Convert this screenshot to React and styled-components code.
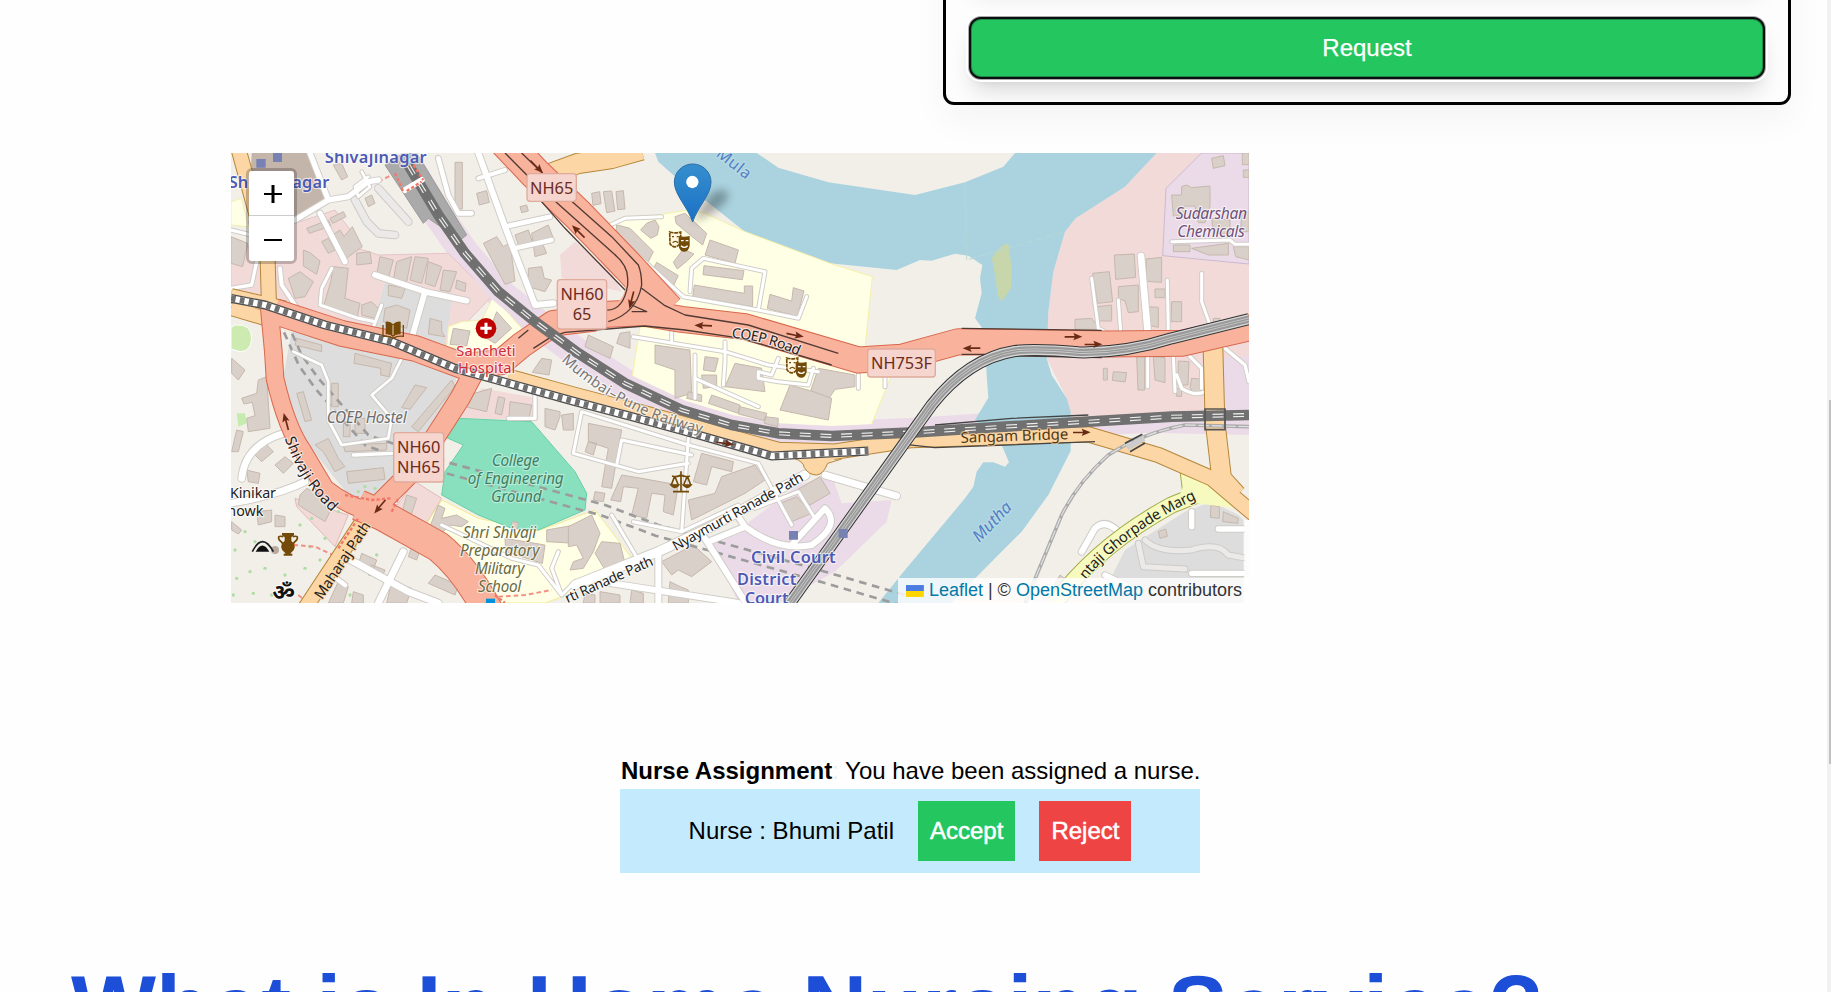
import React from 'react';
import styled, { createGlobalStyle, css } from 'styled-components';

const GlobalStyle = createGlobalStyle`
  * { box-sizing: border-box; }
  html, body { margin: 0; padding: 0; height: 992px; overflow: hidden; background: #fefefe; }
  body { font-family: "Liberation Sans", Arial, sans-serif; font-size: 24px; line-height: 36px; color: #000; }
`;

const Page = styled.div`
  display: flex;
  height: 992px;
  overflow: hidden;
`;
const Content = styled.main`
  flex: 1;
  display: flex;
  flex-direction: column;
  align-items: flex-start;
  min-width: 0;
  overflow: hidden;
`;
const ScrollTrack = styled.div`
  width: 4px;
  padding: 400px 0 0 2px;
  background: #f1f1f1;
`;
const ScrollThumb = styled.div`
  height: 364px;
  background: #c1c1c1;
`;

const RequestCard = styled.section`
  flex: none;
  display: flex;
  flex-direction: column;
  justify-content: flex-end;
  gap: 34px;
  width: 848px;
  height: 185px;
  margin: -80px 0 0 943px;
  padding: 0 23px 23px 23px;
  border: 3px solid #000;
  border-radius: 11px;
  background: #fdfdfd;
  box-shadow: 0 15px 36px rgba(0, 0, 0, 0.045);
`;
const InputField = styled.div`
  height: 40px;
  border-radius: 12px;
  background: #fff;
  box-shadow: 0 15px 22px -4px rgba(0, 0, 0, 0.12);
`;
const RequestButton = styled.button`
  height: 62px;
  border: 2px solid #0c0f10;
  border-radius: 12px;
  background: #24c65f;
  color: #fff;
  font: inherit;
  -webkit-text-stroke: 0.25px #fff;
  box-shadow: inset 0 0 0 1px rgba(20, 70, 40, 0.45), 0 0 0 1px #aaa, 0 0 0 3px #fff,
    0 15px 22px -4px rgba(0, 0, 0, 0.15), 0 6px 9px -4px rgba(0, 0, 0, 0.08);
`;

const MapFrame = styled.section`
  flex: none;
  position: relative;
  width: 1018px;
  height: 450px;
  margin: 48px 0 0 231px;
  overflow: hidden;
`;
const MapDrawing = styled.svg`
  display: block;
  width: 1018px;
  height: 450px;
`;
const ZoomControl = styled.div`
  position: absolute;
  top: 15px;
  left: 15px;
  display: flex;
  flex-direction: column;
  width: 51px;
  border: 3px solid rgba(0, 0, 0, 0.22);
  border-radius: 6px;
  background-clip: padding-box;
`;
const ZoomButton = styled.button`
  display: flex;
  align-items: center;
  justify-content: center;
  height: 45px;
  padding: 2px 0 0 2px;
  border: 0;
  background: #fff;
  border-radius: ${(p) => (p.$first ? '3px 3px 0 0' : '0 0 3px 3px')};
  ${(p) => p.$first && css`border-bottom: 1px solid #ccc;`}
`;
const Attribution = styled.div`
  position: absolute;
  right: 0;
  bottom: 0;
  display: flex;
  align-items: center;
  height: 25px;
  width: 351px;
  padding: 0 7px 0 8px;
  background: rgba(255, 255, 255, 0.8);
  color: #333;
  font-size: 18px;
  line-height: 25px;
  white-space: pre;
`;
const AttributionLink = styled.span`
  color: #0078a8;
`;
const Flag = styled.svg`
  width: 18px;
  height: 12px;
  margin-right: 5px;
`;

const Assignment = styled.section`
  flex: none;
  width: 580px;
  margin: 150px 0 0 620px;
  white-space: nowrap;
`;
const AssignmentText = styled.p`
  margin: 0;
  padding-left: 1px;
  line-height: 36px;
`;
const FaintColon = styled.span`
  color: #ededed;
`;
const NursePanel = styled.div`
  display: flex;
  align-items: center;
  justify-content: center;
  gap: 24px;
  height: 84px;
  background: #c4eafd;
`;
const ActionButton = styled.button`
  height: 60px;
  padding: 0 12px;
  border: 0;
  background: ${(p) => (p.$danger ? '#ef4444' : '#24c65f')};
  color: #fff;
  font: inherit;
  -webkit-text-stroke: 0.5px #fff;
`;
const Heading = styled.h1`
  flex: none;
  margin: 90px 0 0 71px;
  color: #1d4ed8;
  font-size: 90px;
  font-weight: 700;
  line-height: 90px;
  letter-spacing: 0.07px;
  white-space: nowrap;
`;

const Area = styled.path`
  fill: ${(p) => p.$fill};
  stroke: ${(p) => p.$edge || 'none'};
  stroke-width: 3;
`;
const Building = styled.path`
  fill: #d9d0c9;
  stroke: #c6b8ad;
  stroke-width: 3;
`;
const Line = styled.path`
  fill: none;
  stroke: ${(p) => p.$color};
  stroke-width: ${(p) => p.$w};
  stroke-linejoin: round;
  stroke-linecap: ${(p) => p.$cap || 'butt'};
  stroke-dasharray: ${(p) => p.$dash || 'none'};
`;
const Label = styled.text`
  font-family: "Noto Sans", "Open Sans", sans-serif;
  font-size: ${(p) => p.$size || 47}px;
  font-style: ${(p) => (p.$italic ? 'italic' : 'normal')};
  font-weight: ${(p) => p.$weight || 400};
  fill: ${(p) => p.$color || '#222'};
  stroke: ${(p) => p.$halo || 'rgba(255,255,255,.65)'};
  stroke-width: 7;
  stroke-linejoin: round;
  paint-order: stroke;
  text-anchor: middle;
`;
const ShieldBox = styled.rect`
  fill: #f5d5cd;
  stroke: #e0aa9c;
  stroke-width: 4;
`;

const ROAD_KINDS = {
  minor: ['#fff', '#d0cdc8'],
  service: ['#fff', '#cfcbc6'],
  faint: ['#eceae8', '#cdcbca'],
  orange: ['#fcd6a4', '#b58639'],
  trunk: ['#f9b29c', '#d8684e'],
  yellow: ['#f7fabf', '#a5ab46'],
};

function Roads({ kind, items, cap = 'round' }) {
  const [fill, casing] = ROAD_KINDS[kind];
  return (
    <g>
      {items.map(([d, w], i) => <Line key={'c' + i} d={d} $color={casing} $w={w + 6} $cap={cap} />)}
      {items.map(([d, w], i) => <Line key={'f' + i} d={d} $color={fill} $w={w} $cap={cap} />)}
    </g>
  );
}

const RIVER = 'M1290 24L1300 50L1345 90L1440 165L1560 260L1815 355L2015 375L2085 345L2120 347L2190 326L2230 332L2272 360L2265 400L2270 445L2250 520L2280 560L2285 690L2290 758L2250 825L2330 900L2352 952L2340 965L2305 952L2275 952L2255 980L2245 1025L2220 1060L2040 1275L1960 1374H2180L2240 1310L2390 1160L2470 1050L2537 918V800L2525 760L2480 690L2465 640L2470 500L2485 380L2520 260L2552 220L2700 125L2795 24H2370L2335 65L2220 112L2070 150L1810 112L1660 68L1595 24Z';

const AREAS = [
  ['M2795 24L2700 125L2552 220L2520 260L2485 380L2470 500L2465 640L2525 760L2537 830L3072 795V24Z', '#f2dad9'],
  ['M2930 24L2823 130L2813 332L3072 357V24Z', '#ebdbe8', '#cdb9d0'],
  ['M2990 635H3072V870L2640 860V840L2980 790Z', '#ebdbe8'],
  ['M18 330L210 235L330 195L380 260L400 310L460 330L670 325L800 455L660 600L18 450Z', '#f2dad9', '#e5c5c5'],
  ['M1050 290L1005 330L1010 400L1190 440L1160 380Z', '#f2dad9'],
  ['M80 24H245L310 175L210 220L70 240Z', '#c4b5ab'],
  ['M18 170L50 160L70 245L18 240Z', '#ffffe5', '#f3edb0'],
  ['M480 410L600 440L680 470L660 600L440 560Z', '#dddddd'],
  ['M200 560L360 580L700 690L640 840L500 1010L430 1070L370 1050L250 900L170 720Z', '#dddddd'],
  ['M770 730L940 760V825L700 820Z', '#f2dad9'],
  ['M570 1010L650 1060L590 1160L500 1100Z', '#f2dad9', '#e2baba'],
  ['M210 1060L370 1110L330 1205L215 1085Z', '#f2dad9', '#e2baba'],
  ['M805 455L895 555L800 620L665 605L670 545L710 530L770 525Z', '#ffffe5', '#f3edb0'],
  ['M1140 235L1390 195L1440 205L1560 260L1815 355L1942 395L1920 610L1995 700L1935 850L1560 845L1220 705L1245 545L1400 560L1320 450Z', '#ffffe5', '#f6f0a8'],
  ['M650 1065L760 1120L940 1157L1110 1095L1225 1245L1020 1352L960 1374H830L760 1300L590 1160Z', '#ffffe5', '#f3eb92'],
  ['M700 820L920 830L1050 980L1085 1045L1080 1095L940 1155L860 1150L760 1110L650 1050L660 980L715 900L658 875Z', '#88e0be', '#68cfa5'],
  ['M1820 990L1850 1075L2000 1065L1985 1130L1830 1280L1660 1374H1540L1450 1180L1560 1140L1720 1020Z', '#ebdbe8'],
  ['M2880 1100L2960 1070L3040 1110L3055 1125V1374H2620L2700 1215Z', '#dddddd'],
  ['M30 540Q80 535 80 580Q78 620 45 620L18 612V548Z', '#cdebb0', '#fff'],
  ['M35 805L60 805L65 835L40 845Z', '#c4ecae'],
  ['M2300 340Q2325 300 2350 295L2360 370L2358 430L2330 470L2318 450Q2310 380 2300 340Z', '#c8d7ab'],
];

const BUILDINGS = [
  // north west
  'M325 60L350 55L368 95L350 105Z M420 160l20-10 10 25-20 10Z M690 52h22v140h-22Z M755 145l30-8 8 35-30 8Z M885 185l20-5 5 18-20 5Z M920 265l50-25 15 40-35 10 15 35-35 10Z M870 270l40-15 12 35-40 15Z M775 295l40-20 20 30 20-12 15 115-30 10Z M910 370l40-5 8 35 22 5-20 35-50-15Z M950 640l30 5-8 45-50-8Z',
  'M245 250l65-25 8 18-65 22Z M315 220l40-20 8 15-40 20Z M315 275l30-20 12 20 25-30 30 60-55 40Z M290 290l20-10 20 35-20 10Z M395 325l40-5 5 35-45 5Z M235 315l20 8 30 25-10 40-40-25Z M190 400l35-20 40 30-25 45-30 5Z M325 365l45 5-10 90 45 15-8 40-100-35 20-70Z M465 335l40 10-15 55-35-10Z M515 350l45-15-15 75-40-5Z M570 335l40 5-20 75-35-10Z M610 350l40 15-20 60-30-10Z M655 375l40 5-20 60-30-5Z M695 405l28 10-3 25-28-10Z M490 420l50 10-10 30-40-8Z M480 490l35-10 40 15-10 55-70-20Z M615 520l35 10v30l10 15-50-8Z M685 550l50 8-10 45-50-5Z M815 500l45 50-50 45-25-15Z M410 480l30-10 20 20-10 30-40-10Z M18 275l50 20-15 70-35-10Z',
  'M215 580l75 20v20l-80-20Z M390 625l90 25 20 5-8 40-25-5v-20l-80-15Z M20 640l40 35-20 30-20-20Z',
  // south west
  'M50 760l45-15 5-40 25-10 10 155-65 10-5-40 25-8-8-40-25 5Z M35 855l20 5-15 60h-20Z M215 745l20-5 25 85-20 5Z M270 900l40-20 30 60 20 25-30 15-35-60Z M80 920l45-20 20 20-35 30Z M150 960l30-25 25 20-30 30Z M65 975l40 10-5 30-30-5Z M365 980l110-12 5 35-110 12Z M355 900l130-5v20l-125 5Z M320 715h20v70h-20Z M355 830h20v45h-20Z M390 820h30v45h-30Z M570 720l35 8-50 65-25-5Z M680 705l10 20-110 135-20-15Z',
  'M225 1050l20-20 85 40-30 60-80-50Z M545 1050l30 10-20 60 30 10-10 25-50-30Z M95 1100l45-5v35l-40 10Z M150 1110l30 5v30h-30Z M20 1130l30 25-10 12-20-12Z M640 1080l20 10-10 30 45-10 35 20-20 15-35-5-40 40-30-10Z M730 750l70-20-15 70-65-15Z M820 755l20 5-10 50-20-5Z M855 770l65 10-8 40-60-5Z M960 790l45 10v15l-15 40-30-10Z M1010 810l35-5v50h-30Z M410 1225l45 20-10 30-45-15Z M440 1260l40 15-10 25-40-10Z M340 1310l30 15-15 49h-45Z M500 1310l60 20-15 44h-60Z M630 1290l70 30-10 30-80-35Z M965 1155l85-15v55l-85-5Z M840 1180l120 20-8 55-110-35Z M860 1130l20 2-3 20-18-4Z M385 1340l30 10v24h-35Z M560 1205l25 10-10 30-25-10Z',
  // campus
  'M1100 145l24-5 4 36-24 5Z M1135 140l25-2 10 60-25 5Z M1173 140l22-3 5 55-22 2Z M1350 215l30-10 65 60-12 35-50-40-30-25Z M1265 235l25-10 12 20-5 25-20 10-30-25Z M1175 240l40 10 70 70-15 30-100-65Z M1455 285l85 30-10 40-90-25Z M1375 312l32 15-20 20-30 25-12-20Z M1295 352l65 40-15 30-65-40Z M1437 362l120 15-5 27-118-15Z M1408 420l150 25v-22h25v62l-180-30Z M1635 448l65 20 5-40 32 10-20 77-90-25Z',
  'M1090 570l75 35-10 35-75-35Z M1185 565l30-5v50l-40-15Z M1290 600l105 15 5 130-50 15v-85l-60-20Z M1440 635l40 5-10 40-35-5Z M1430 690h45v35l-40 5Z M1530 655l80 15 10 70-120-15Z M1780 670l110 20v35l-60 8-20 30-60-5Z',
  'M1695 720l70 20 55 20-10 65-145-30Z M1390 740l40 10v20l-45-10Z M1460 750l85 30-5 25-90-30Z M1545 785l80 20-5 22-80-20Z M1620 815l40 5-2 25-40-10Z',
  'M1090 835l100 20-30 175-30-5 20-115-60-20Z M1090 890l25 5-10 35-25-10Z M1110 1040l30 5-5 25-30-5Z M1190 990l60 10 110 20-15 90-30-10 5-50-40-5-15 75-45-10 20-80-45-5-8 45-30-5Z M1430 925l95 25-5 30-60-15-15 55-40-10Z M1390 1065l80-20 20-50 100-35 30 45-60 40-160 80Z M1665 1075l50-20 45 50-60 25Z M1715 1035l70-40 30 50-60 35Z M1030 1145l70-35 25 55-20 55-30 50-40 5 10-25 30-10-20-40-25 5Z M1130 1190l55 5 15 60-60 20-30-50Z M1310 1250l95-50 55 50-60 45-40-20-20 15Z M1335 1310l30 15 25 10v39h-60Z M1125 1340l60 10v24h-60Z M1220 1335l35 10v29h-40Z M1080 1345l30 5v24h-35Z',
  // east
  'M2960 40l35-8 5 30-35 8Z M2840 150h30v-25l15-5 15 8 55-5v60l-15 50h-20l-10-50h-30l-5 30h-30Z M2960 220l55 5v40h-50Z M2845 300h50v20h-50Z M2900 310l110-15v35h-60Z M3025 305h47v40l-40-10Z M3052 24h20v35h-20Z M3050 200h22v60h-25Z M3055 75h17v22h-17Z M2668 330l60-3 4 70-60 6Z M2763 342l47-5v75l-45-3Z M2603 385l50-5 10 90-45 5Z M2615 485l45-5v48h-40Z M2680 425l60-5v80l-30 3-10-35-20-8Z M2550 523l50-3 25 33h-75Z M2790 432h30v26h-30Z M2770 485l30 2v60l-25-5Z M2840 470h30v60h-32Z M2965 520h20v10h-20Z M2635 670h12v35h-12Z M2665 680l40 3-5 28-38-5Z M2735 635h24v100h-20Z M2785 635l35 3v75l-30-8Z M2860 648l32 2-3 70h-30Z M2900 700l35 3v30l-25 15-15-20Z M2855 730h15v24h-15Z',
  'M2958 1080l25 5v35l-27-3Z M2995 1100l45 20-2 15-45-5Z M2800 1160l22-8 5 22-22 6Z M2505 1290l20 15-10 30-30-10Z',
];

const MINOR_ROADS = [
  ['M255 24L310 165L370 155L430 110L460 105M310 165L210 225', 16],
  ['M410 80L435 125L400 155L390 125L430 95', 8],
  ['M285 205L360 350', 16],
  ['M450 390L600 440L725 467', 17],
  ['M600 440L560 580', 17],
  ['M760 24L840 245L880 350L930 480L985 475', 18],
  ['M840 245L975 215M870 310L980 285', 14],
  ['M640 40L670 150L700 205L740 205', 14],
  ['M760 100L840 75', 12],
  ['M165 370L170 420L210 480', 12],
  ['M320 370L290 430L285 480L400 520L450 530M470 480L440 560', 9],
  ['M18 255L120 280M95 350L80 420L18 430', 10],
  ['M205 620L290 660L310 710V825L350 900L490 880L500 820L440 750L500 700L530 640', 8],
  ['M385 930L500 925', 10],
  ['M175 865Q60 900 50 1000M18 1075Q160 1050 240 1010', 20],
  ['M350 1230L550 1340L640 1374M535 1220L460 1374', 20],
  ['M320 1290L360 1320', 14],
  ['M930 740V820H850', 10],
  ['M1145 245L1200 220L1310 215M1145 245L1375 455L1600 495L1720 520L1745 455M1600 495L1620 380L1435 340L1400 370L1395 440', 9],
  ['M1225 575L1500 620L1630 660L1780 680M1500 590V650L1495 720M1340 560V590M1410 630V760M1660 640L1640 690L1600 680V700L1660 710L1750 720L1765 670', 9],
  ['M1980 650V725M1900 690V730M1410 700L1600 785', 9],
  ['M1070 800L1390 900L1600 955L1700 1140M1070 800L1045 925L1240 980L1390 955M1190 885L1400 930M1190 885L1175 960M1390 880L1370 1160', 9],
  ['M1225 1130L1370 1160L1540 1080M1160 1110L1240 1245M1590 1090L1720 1040L1770 1120', 9],
  ['M1050 1320L1300 1220L1450 1150L1740 990', 27],
  ['M1800 990L2015 1053', 20],
  ['M1450 1190L1560 1145M1560 1145Q1660 1220 1760 1200Q1850 1140 1800 1090L1700 1200M1440 1180L1560 1370M1560 1145L1530 1100', 18],
  ['M1300 1230V1374M1160 1315L1540 1374', 18],
  ['M650 1140L860 1240L940 1260L1010 1350L1050 1310M1000 1220L980 1270L1010 1350', 9],
  ['M2600 400L2620 550L2640 560M2680 465L2687 560M2827 405L2830 560M2930 385V470L2955 540', 9],
  ['M2748 333L2768 560', 20],
  ['M2840 290L3015 285L3030 298H3072M2768 635V725M2845 635L2850 740', 9],
  ['M2855 690L2870 730Q2910 755 2940 740M2895 635L2930 670V730M3000 610L3060 660L3072 710', 10],
  ['M2570 1220L2610 1150Q2640 1120 2680 1160', 18],
  ['M2900 1100V1145M2980 1152H3055M2900 1285H3055M2640 1290L2700 1320', 16],
];

const RAIL = 'M550 60L640 210L720 325L820 440L930 530L1060 625L1200 715L1370 795L1520 840L1660 865L1820 873L2070 862L2340 845L2590 830L2840 815L3072 810';
const CHECKER = 'M18 460L120 480L300 540L500 590L690 670L780 695L1050 770L1220 815L1420 870L1640 933L1930 918';
const METRO = 'M1695 1374L2070 850L2120 780Q2230 640 2370 618Q2430 610 2560 622Q2700 625 2840 580L3072 522';
const SIDING = 'M3072 845L2880 840Q2750 865 2650 930Q2560 1010 2510 1110L2400 1374';
const TUNNEL = 'M185 530L230 630L280 700L430 870L660 950L1140 1080L1300 1140L1480 1190L1800 1280L2040 1350';

const ARROWS = [
  [935, 65, 45], [1060, 260, 225], [1220, 465, 105], [1435, 542, 183], [1710, 570, 12],
  [2240, 610, 180], [2545, 575, 0], [2605, 598, 0], [183, 830, -105], [465, 1085, 130], [1500, 895, 8], [2570, 862, 0],
];

const DOTS = [[60,1160],[90,1190],[150,1215],[75,1280],[120,1270],[35,1300],[180,1290],[240,1270],[85,1345],[140,1350],[225,1140],[255,1205],[300,1180],[340,1100],[455,1230],[420,1025],[450,1030],[400,1040],[390,1205],[375,1350],[30,1215],[260,1120],[285,1245],[25,1350],[480,1040]];

function Shield({ x, y, w, h, lines }) {
  return (
    <g>
      <ShieldBox x={x} y={y} width={w} height={h} rx="9" />
      {lines.map((t, i) => (
        <Label key={t} x={x + w / 2} y={y + 61 + i * 59} $size={49} $color="#6c2b20" $halo="none">{t}</Label>
      ))}
    </g>
  );
}

function Masks({ x, y }) {
  return (
    <g transform={`translate(${x} ${y})`}>
      <path d="M3 3Q18 8 36 3V36Q18 58 4 38Z" fill="#fff8df" stroke="#734a08" strokeWidth="5" strokeDasharray="12 2" />
      <path d="M10 17h6M24 17h6M12 35q8-8 16 0" fill="none" stroke="#734a08" strokeWidth="4" />
      <path d="M30 15Q46 20 63 15V44Q60 62 46 62Q32 60 30 44Z" fill="#734a08" />
      <path d="M37 29h8M51 29h8M37 44q10 10 20 0" fill="none" stroke="#fff" strokeWidth="4" />
    </g>
  );
}

function CityMap() {
  return (
    <MapDrawing viewBox="18 24 3054 1350" preserveAspectRatio="none">
      <defs>
        <linearGradient id="pin" x1="0" y1="0" x2="0" y2="1">
          <stop offset="0" stopColor="#358fce" />
          <stop offset="1" stopColor="#1b70c5" />
        </linearGradient>
        <filter id="soft" x="-40%" y="-40%" width="180%" height="180%"><feGaussianBlur stdDeviation="12" /></filter>
        <path id="shivaji" d="M178 875Q220 1010 325 1105" />
        <path id="mumbai" d="M1000 640Q1180 810 1440 868" />
        <path id="coep" d="M1514 578Q1620 585 1725 634" />
        <path id="nyay" d="M1350 1220L1740 1005" />
        <path id="ranade" d="M1025 1376L1290 1258" />
        <path id="ghorpade" d="M2580 1308Q2700 1160 2918 1060" />
        <path id="maharaj" d="M290 1368L440 1140" />
      </defs>
      <rect x="18" y="24" width="3054" height="1350" fill="#f2efe9" />
      <Line d={RAIL} $color="#ebdbe8" $w={88} />
      {AREAS.slice(0, 1).map(([d, f]) => <Area key={d} d={d} $fill={f} />)}
      <Area d={RIVER} $fill="#aad3df" />
      {AREAS.slice(1).map(([d, f, e]) => <Area key={d} d={d} $fill={f} $edge={e} />)}
      <Line d="M2220 112L2225 345L2520 260" $color="#b7d8d6" $w={3} $dash="22 8" />
      <Line d="M550 60L640 210L720 325L820 440L930 530L1060 625L1200 715L1370 795L1520 840L1660 865L1820 873L2070 862" $color="#ebdbe8" $w={60} />
      {DOTS.map(([x, y]) => <circle key={x + '-' + y} cx={x} cy={y} r="5" fill="#aedda5" />)}
      {BUILDINGS.map((d) => <Building key={d} d={d} />)}
      <Area d="M480 60L535 24H575L725 270L705 285L610 220L595 235Z" $fill="#aaa" $edge="#999" />
      <Line d={TUNNEL} $color="#9c9c9c" $w={8} $dash="23 17" />
      <Line d={TUNNEL} transform="translate(-8 32)" $color="#9c9c9c" $w={8} $dash="23 17" />
      <Line d="M205 1200L270 1205L345 1240M460 110L500 90M820 1355L900 1350L980 1335M220 1350L250 1374" $color="#f58f83" $w={6} $dash="14 9" />
      <Roads kind="faint" items={[['M390 165L425 230L460 265L510 270M460 130L550 230', 20], ['M2760 1185Q2800 1225 2900 1215Q2980 1190 3010 1230L3055 1238M2740 1195L2755 1265L2880 1272', 15]]} />
      <Roads kind="minor" items={MINOR_ROADS} />
      <Roads kind="yellow" cap="butt" items={[['M2490 1374Q2620 1200 2840 1080L2990 1020M2900 1060L2890 980', 46]]} />
      <Area d="M2860 1060L2880 1010L2950 980L3035 1090L2910 1075Z" $fill="#f7fabf" />
      <Roads kind="orange" cap="butt" items={[
        ['M40 10L100 230L128 350L132 480', 42],
        ['M18 452L180 490M18 490L120 520', 40],
        ['M950 95L1060 55L1160 40L1250 15', 58],
        ['M850 695L1050 750L1260 805L1440 855L1660 915L1830 920L2060 885L2590 868L2800 930L2960 1000L3090 1110', 43],
        ['M2964 610L2970 830L2990 1000L3035 1050', 56],
        ['M240 1390L425 1110', 42],
      ]} />
      <path d="M1710 940Q1735 950 1738 968Q1752 990 1775 990Q1795 988 1808 955L1850 930Z" fill="#fcd6a4" />
      <path d="M1710 941Q1735 950 1738 968Q1752 990 1775 990Q1795 988 1808 955L1850 942" fill="none" stroke="#b58639" strokeWidth="3" />
      <Roads kind="trunk" cap="butt" items={[
        ['M150 500L350 565L570 610L720 665L830 650L890 600L985 535L1110 520', 74],
        ['M133 490L145 620L150 700Q185 850 235 920L300 1030Q370 1085 450 1105', 50],
        ['M400 1080L470 1110L640 1205Q720 1270 790 1400', 88],
        ['M750 675L705 760L570 970L430 1110', 58],
        ['M840 -10L930 85L1060 210L1210 365L1330 495', 93],
        ['M1020 522L1150 508L1250 503L1370 523L1560 545L1900 645L2030 637L2200 590L2650 597L2870 595L3090 545', 75],
      ]} />
      <Line d="M1070 520Q1215 520 1222 430V390Q1220 365 1170 320" $color="#f9b29c" $w={43} />
      <Line d="M840 24L930 115L1020 195L1165 325Q1208 360 1208 400V420Q1195 500 1140 495M915 130L1020 250L1200 435M890 24L1030 160L1160 275L1240 360Q1250 385 1250 420Q1235 505 1150 530M1250 430L1320 482L1380 510L1570 540L1840 625M1220 480L1265 500L1220 500M1020 562L1260 543L1380 555L1550 580L1820 660M2210 550L2630 556M2210 628H2280M2350 632L2630 638M880 580L910 555M925 610L980 575L1020 562" $color="#503a33" $w={4} />
      <Line d={RAIL} $color="#707070" $w={32} />
      <Line d={RAIL} $color="#eee" $w={12} $dash="33 29" />
      <Line d={RAIL} $color="#707070" $w={5} />
      <Line d="M2130 840L2360 820L2590 810M2040 898L2130 908L2610 890" $color="#444" $w={4} />
      <Line d={SIDING} $color="#aaa" $w={11} />
      <Line d={SIDING} $color="#dedede" $w={4} $dash="32 8" />
      <path d="M2940 792h60v62h-60Z" fill="none" stroke="#555" strokeWidth="5" />
      <path d="M2700 895l52-27M2715 920l45-26" stroke="#444" strokeWidth="5" />
      <path d="M2706 908l51-28" stroke="#ccc" strokeWidth="17" />
      <Line d={CHECKER} $color="#4d4d4d" $w={27} />
      <Line d={CHECKER} $color="#fff" $w={19} />
      <Line d={CHECKER} $color="#707070" $w={19} $dash="14 13" />
      <Line d={METRO} $color="#333" $w={36} />
      <Line d={METRO} $color="#d5d5d5" $w={30} />
      <Line d={METRO} $color="#999" $w={22} />
      <Line d={METRO} $color="#ccc" $w={9} />
      <Line d={METRO} $color="#999" $w={4} />
      <path d="M540 135L590 105" stroke="#fff" strokeWidth="18" strokeLinecap="round" />
      <Line d="M510 85L535 140M565 60L595 105M545 138L590 110M360 1050L440 1065L500 1060M810 1350L840 1374M340 1210L400 1120M500 1100L520 1060" $color="#f2776b" $w={7} $dash="10 6" />
      {ARROWS.map(([x, y, r]) => (
        <path key={x} transform={`translate(${x} ${y}) rotate(${r})`} d="M-26 -2H4L0 -11L27 0L0 11L4 3H-26Z" fill="#6a2b16" />
      ))}

      <path d="M94 42h28v26H94ZM144 24h27v27h-27ZM1692 1158h27v26h-27ZM1841 1152h27v27h-27Z" fill="#7881b3" />
      <rect x="783" y="1361" width="27" height="20" fill="#0092da" />
      <Label x="452" y="54" $size={49} $weight={600} $color="#4c5ab5" textLength="306">Shivajinagar</Label>
      <Label x="162" y="130" $size={49} $weight={600} $color="#4c5ab5" textLength="302">Shivajinagar</Label>
      <Label x="783" y="632" $size={44} $color="#d12a38" textLength="178">Sancheti</Label>
      <Label x="785" y="685" $size={44} $color="#d12a38" textLength="172">Hospital</Label>
      <circle cx="783" cy="550" r="31" fill="#bf0000" />
      <path d="M783 533v34M766 550h34" stroke="#fff" strokeWidth="9" />
      <path d="M482 530Q495 527 504 538Q514 527 527 530V568Q512 566 504 576Q495 566 482 568Z" fill="#734a08" />
      <path d="M474 540v34q18-2 30 6q12-8 31-6v-34" fill="none" stroke="#734a08" strokeWidth="4" />
      <path d="M504 540v30" stroke="#f4cbb5" strokeWidth="3" />
      <Label x="425" y="835" $size={46} $italic $color="#6d6d6d" textLength="240">COEP Hostel</Label>
      <Label x="872" y="962" $size={46} $italic $color="#3b8266" $halo="#b6ebd6" textLength="143">College</Label>
      <Label x="872" y="1016" $size={46} $italic $color="#3b8266" $halo="#b6ebd6" textLength="288">of Engineering</Label>
      <Label x="874" y="1070" $size={46} $italic $color="#3b8266" $halo="#b6ebd6" textLength="152">Ground</Label>
      {['Shri Shivaji', 'Preparatory', 'Military', 'School'].map((t, i) => (
        <Label key={t} x="824" y={1180 + i * 54} $size={46} $italic $color="#6b6b40" textLength={[220, 238, 148, 130][i]}>{t}</Label>
      ))}
      <Label x="2959" y="221" $size={47} $italic $color="#71517c" textLength="214">Sudarshan</Label>
      <Label x="2958" y="275" $size={47} $italic $color="#71517c" textLength="202">Chemicals</Label>
      <Label x="84" y="1060" $size={43} textLength="138">Kinikar</Label>
      <Label x="61" y="1114" $size={43} textLength="108">howk</Label>
      <Label x="1705" y="1255" $size={49} $weight={600} $color="#4c5ab5" textLength="254">Civil Court</Label>
      <Label x="1625" y="1320" $size={49} $weight={600} $color="#4c5ab5" textLength="178">District</Label>
      <Label x="1625" y="1377" $size={49} $weight={600} $color="#4c5ab5" textLength="132">Court</Label>
      <Label transform="translate(1517 68) rotate(38)" $size={48} $color="#5280c4" $halo="#b9dce6" textLength="118">Mula</Label>
      <Label transform="translate(2313 1142) rotate(-46)" $size={50} $italic $color="#5280c4" $halo="#b9dce6" textLength="145">Mutha</Label>
      <Label transform="translate(2369 888) rotate(-2)" $size={45} $color="#503814" $halo="rgba(252,214,164,.7)" textLength="323">Sangam Bridge</Label>
      <Label $size={45}><textPath href="#shivaji" startOffset="50%" textLength="265">Shivaji Road</textPath></Label>
      <Label $size={44} $color="#777"><textPath href="#mumbai" startOffset="50%" textLength="480">Mumbai–Pune Railway</textPath></Label>
      <Label $size={42}><textPath href="#coep" startOffset="50%" textLength="208">COEP Road</textPath></Label>
      <Label $size={42}><textPath href="#nyay" startOffset="50%" textLength="440">Nyaymurti Ranade Path</textPath></Label>
      <Label $size={42}><textPath href="#ranade" startOffset="50%" textLength="285">rti Ranade Path</textPath></Label>
      <Label $size={44} $halo="#f7fabf"><textPath href="#ghorpade" startOffset="50%" textLength="415">ntaji Ghorpade Marg</textPath></Label>
      <Label $size={44} $halo="#fcd6a4"><textPath href="#maharaj" startOffset="50%" textLength="268">Maharaj Path</textPath></Label>

      <Shield x={906} y={86} w={148} h={83} lines={['NH65']} />
      <Shield x={997} y={404} w={148} h={148} lines={['NH60', '65']} />
      <Shield x={506} y={863} w={150} h={148} lines={['NH60', 'NH65']} />
      <Shield x={1928} y={612} w={203} h={84} lines={['NH753F']} />
      <Masks x={1331} y={258} />
      <Masks x={1682} y={636} />
      <g transform="translate(1368 1010)" fill="none" stroke="#734a08" strokeWidth="5">
        <path d="M0-31V29M-24 30H24M-27-17Q-12-12 0-20Q12-12 27-17M-19-17L-29 10M-19-17L-8 10M19-17L8 10M19-17L29 10" />
        <path d="M-30 10H-7Q-18 24-30 10ZM7 10H30Q19 24 7 10Z" fill="#734a08" />
      </g>
      <path d="M171 1164h36v7l-8 6v10q22 19-2 38v1h5v6h-26v-6h5v-1q-24-20-2-38v-10l-8-6Z" fill="#734a08" />
      <path d="M175 1175q-20-5-12 10q10 8 14 17M203 1175q20-5 12 10q-10 8-14 17" fill="none" stroke="#734a08" strokeWidth="5" />
      <circle cx="150" cy="1215" r="12" fill="#b9aaa0" />
      <path d="M82 1220Q112 1160 145 1220" fill="none" stroke="#1d1d1d" strokeWidth="5" />
      <path d="M92 1220Q112 1183 133 1220Z" fill="#111" />
      <Label x="176" y="1366" $size={67} $weight={700} $color="#111">ॐ</Label>
      <Area d="M3058 1125H3072V1374H3058Z" $fill="#fcfcfc" />

      <path d="M1405 228L1440 170Q1480 115 1510 145Q1512 185 1405 232Z" fill="#000" opacity=".3" filter="url(#soft)" />
      <path d="M1403 231C1388 185 1348 150 1348 111A55 54 0 0 1 1458 111C1458 150 1418 185 1403 231Z" fill="url(#pin)" stroke="#2e6fa6" strokeWidth="3" />
      <circle cx="1402" cy="111" r="18.5" fill="#fff" />
    </MapDrawing>
  );
}

export default function App() {
  return (
    <>
      <GlobalStyle />
      <Page>
        <Content>
          <RequestCard>
            <InputField />
            <RequestButton>Request</RequestButton>
          </RequestCard>
          <MapFrame>
            <CityMap />
            <ZoomControl>
              <ZoomButton $first aria-label="Zoom in">
                <svg width="18" height="18" viewBox="0 0 18 18"><path d="M0 8h18v2H0ZM7.5 0h3v18h-3Z" /></svg>
              </ZoomButton>
              <ZoomButton aria-label="Zoom out">
                <svg width="18" height="18" viewBox="0 0 18 18"><path d="M0 8h18v2H0Z" /></svg>
              </ZoomButton>
            </ZoomControl>
            <Attribution>
              <Flag viewBox="0 0 18 12"><path fill="#4c7be1" d="M0 0h18v6H0z" /><path fill="#ffd500" d="M0 6h18v6H0z" /></Flag>
              <AttributionLink>Leaflet</AttributionLink>{' | © '}
              <AttributionLink>OpenStreetMap</AttributionLink>{' contributors'}
            </Attribution>
          </MapFrame>
          <Assignment>
            <AssignmentText>
              <strong>Nurse Assignment</strong><FaintColon>:</FaintColon> You have been assigned a nurse.
            </AssignmentText>
            <NursePanel>
              <span>Nurse : Bhumi Patil</span>
              <ActionButton>Accept</ActionButton>
              <ActionButton $danger>Reject</ActionButton>
            </NursePanel>
          </Assignment>
          <Heading>What is In-Home Nursing Service?</Heading>
        </Content>
        <ScrollTrack><ScrollThumb /></ScrollTrack>
      </Page>
    </>
  );
}
